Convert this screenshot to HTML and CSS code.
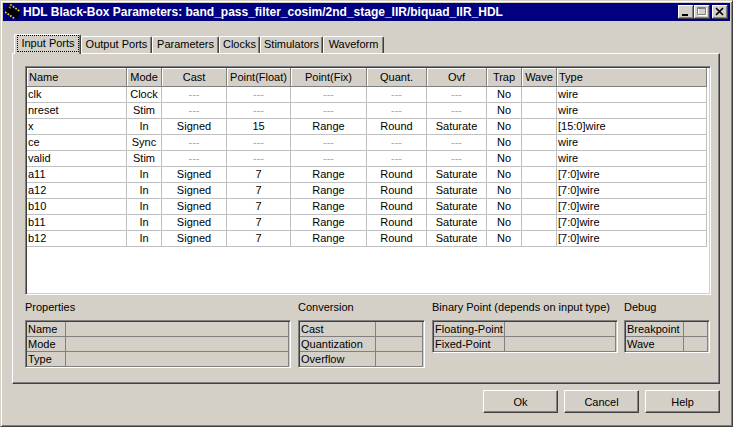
FILE: index.html
```html
<!DOCTYPE html>
<html>
<head>
<meta charset="utf-8">
<title>HDL Black-Box Parameters</title>
<link rel="stylesheet" href="styles.css">
</head>
<body>
<div class="window">
  <div class="titlebar">
    <svg class="appicon" width="16" height="16" viewBox="0 0 16 16">
      <g transform="rotate(35 8 8)">
        <rect x="1.5" y="2.6" width="1.7" height="2" fill="#f0d000"/>
        <rect x="4.6" y="2.6" width="1.7" height="2" fill="#f0d000"/>
        <rect x="7.7" y="2.6" width="1.7" height="2" fill="#f0d000"/>
        <rect x="10.8" y="2.6" width="1.7" height="2" fill="#f0d000"/>
        <rect x="1.5" y="11.4" width="1.7" height="2" fill="#f0d000"/>
        <rect x="4.6" y="11.4" width="1.7" height="2" fill="#f0d000"/>
        <rect x="7.7" y="11.4" width="1.7" height="2" fill="#f0d000"/>
        <rect x="10.8" y="11.4" width="1.7" height="2" fill="#f0d000"/>
        <rect x="0.5" y="4.5" width="14.5" height="7" fill="#000"/>
        <rect x="1.5" y="5.5" width="2.5" height="1.2" fill="#909090"/>
      </g>
    </svg>
    <span class="title">HDL Black-Box Parameters: band_pass_filter_cosim/2nd_stage_IIR/biquad_IIR_HDL</span>
    <div class="caption-btns">
      <span class="cbtn">
        <svg width="16" height="14" viewBox="0 0 16 14"><rect x="4" y="9" width="6" height="2" fill="#000"/></svg>
      </span>
      <span class="cbtn">
        <svg width="16" height="14" viewBox="0 0 16 14">
          <path d="M4.5 3.5h8v7h-8z" fill="none" stroke="#fff"/>
          <path d="M3.5 2.5h8v7h-8z M3 3.5h9" fill="none" stroke="#808080"/>
        </svg>
      </span>
      <span class="cbtn close">
        <svg width="16" height="14" viewBox="0 0 16 14"><path d="M4 3 L11 10 M11 3 L4 10" stroke="#000" stroke-width="1.7" fill="none"/></svg>
      </span>
    </div>
  </div>

  <div class="client">
    <div class="tabs">
      <div class="tab selected t-input"><span class="focus">Input Ports</span></div>
      <div class="tab t-output">Output Ports</div>
      <div class="tab t-params">Parameters</div>
      <div class="tab t-clocks">Clocks</div>
      <div class="tab t-stim">Stimulators</div>
      <div class="tab t-wave">Waveform</div>
    </div>

    <div class="panel">
      <div class="gridbox">
        <div class="grow ghead">
          <div class="hc left">Name</div>
          <div class="hc">Mode</div>
          <div class="hc">Cast</div>
          <div class="hc">Point(Float)</div>
          <div class="hc">Point(Fix)</div>
          <div class="hc">Quant.</div>
          <div class="hc">Ovf</div>
          <div class="hc">Trap</div>
          <div class="hc">Wave</div>
          <div class="hc left">Type</div>
        </div>

        <div class="grow">
          <div class="c left">clk</div><div class="c">Clock</div><div class="c dim">---</div><div class="c dim">---</div><div class="c dim">---</div><div class="c dim">---</div><div class="c dim">---</div><div class="c">No</div><div class="c"></div><div class="c left">wire</div>
        </div>
        <div class="grow">
          <div class="c left">nreset</div><div class="c">Stim</div><div class="c dim">---</div><div class="c dim">---</div><div class="c dim">---</div><div class="c dim">---</div><div class="c dim">---</div><div class="c">No</div><div class="c"></div><div class="c left">wire</div>
        </div>
        <div class="grow">
          <div class="c left">x</div><div class="c">In</div><div class="c">Signed</div><div class="c">15</div><div class="c">Range</div><div class="c">Round</div><div class="c">Saturate</div><div class="c">No</div><div class="c"></div><div class="c left">[15:0]wire</div>
        </div>
        <div class="grow">
          <div class="c left">ce</div><div class="c">Sync</div><div class="c dim">---</div><div class="c dim">---</div><div class="c dim">---</div><div class="c dim">---</div><div class="c dim">---</div><div class="c">No</div><div class="c"></div><div class="c left">wire</div>
        </div>
        <div class="grow">
          <div class="c left">valid</div><div class="c">Stim</div><div class="c dim">---</div><div class="c dim">---</div><div class="c dim">---</div><div class="c dim">---</div><div class="c dim">---</div><div class="c">No</div><div class="c"></div><div class="c left">wire</div>
        </div>
        <div class="grow">
          <div class="c left">a11</div><div class="c">In</div><div class="c">Signed</div><div class="c">7</div><div class="c">Range</div><div class="c">Round</div><div class="c">Saturate</div><div class="c">No</div><div class="c"></div><div class="c left">[7:0]wire</div>
        </div>
        <div class="grow">
          <div class="c left">a12</div><div class="c">In</div><div class="c">Signed</div><div class="c">7</div><div class="c">Range</div><div class="c">Round</div><div class="c">Saturate</div><div class="c">No</div><div class="c"></div><div class="c left">[7:0]wire</div>
        </div>
        <div class="grow">
          <div class="c left">b10</div><div class="c">In</div><div class="c">Signed</div><div class="c">7</div><div class="c">Range</div><div class="c">Round</div><div class="c">Saturate</div><div class="c">No</div><div class="c"></div><div class="c left">[7:0]wire</div>
        </div>
        <div class="grow">
          <div class="c left">b11</div><div class="c">In</div><div class="c">Signed</div><div class="c">7</div><div class="c">Range</div><div class="c">Round</div><div class="c">Saturate</div><div class="c">No</div><div class="c"></div><div class="c left">[7:0]wire</div>
        </div>
        <div class="grow">
          <div class="c left">b12</div><div class="c">In</div><div class="c">Signed</div><div class="c">7</div><div class="c">Range</div><div class="c">Round</div><div class="c">Saturate</div><div class="c">No</div><div class="c"></div><div class="c left">[7:0]wire</div>
        </div>
      </div>

      <div class="groups">
        <div class="group g-props">
          <div class="glabel">Properties</div>
          <div class="pbox">
            <div class="prow"><div class="pk">Name</div><div class="pv"></div></div>
            <div class="prow"><div class="pk">Mode</div><div class="pv"></div></div>
            <div class="prow"><div class="pk">Type</div><div class="pv"></div></div>
          </div>
        </div>
        <div class="group g-conv">
          <div class="glabel">Conversion</div>
          <div class="pbox">
            <div class="prow"><div class="pk">Cast</div><div class="pv"></div></div>
            <div class="prow"><div class="pk">Quantization</div><div class="pv"></div></div>
            <div class="prow"><div class="pk">Overflow</div><div class="pv"></div></div>
          </div>
        </div>
        <div class="group g-bin">
          <div class="glabel">Binary Point (depends on input type)</div>
          <div class="pbox">
            <div class="prow"><div class="pk">Floating-Point</div><div class="pv"></div></div>
            <div class="prow"><div class="pk">Fixed-Point</div><div class="pv"></div></div>
          </div>
        </div>
        <div class="group g-debug">
          <div class="glabel">Debug</div>
          <div class="pbox">
            <div class="prow"><div class="pk">Breakpoint</div><div class="pv"></div></div>
            <div class="prow"><div class="pk">Wave</div><div class="pv"></div></div>
          </div>
        </div>
      </div>
    </div>

    <div class="buttons">
      <div class="btn">Ok</div>
      <div class="btn">Cancel</div>
      <div class="btn">Help</div>
    </div>
  </div>
</div>
</body>
</html>
```

FILE: styles.css
```css
html, body {
  margin: 0;
  padding: 0;
  background: #d4d0c8;
}

.window {
  width: 733px;
  height: 427px;
  box-sizing: border-box;
  background: #d4d0c8;
  border: 1px solid;
  border-color: #d4d0c8 #404040 #404040 #d4d0c8;
  box-shadow: inset 1px 1px #ffffff, inset -1px -1px #808080;
  padding: 2px;
  font-family: "Liberation Sans", Arial, sans-serif;
  font-size: 11px;
  color: #000;
  overflow: hidden;
}

/* Title bar */
.titlebar {
  height: 18px;
  background: #000080;
  display: flex;
  align-items: center;
  color: #fff;
}

.appicon {
  margin-left: 2px;
  flex: none;
}

.title {
  margin-left: 2px;
  font-weight: bold;
  font-size: 12px;
  white-space: nowrap;
}

.caption-btns {
  margin-left: auto;
  margin-right: 2px;
  display: flex;
}

.cbtn {
  width: 16px;
  height: 14px;
  box-sizing: border-box;
  background: #d4d0c8;
  box-shadow: inset -1px -1px #404040, inset 1px 1px #ffffff, inset -2px -2px #808080;
  display: block;
}

.cbtn svg {
  display: block;
}

.cbtn.close {
  margin-left: 2px;
}

/* Client area */
.client {
  padding: 0 10px 0 9px;
}

.tabs {
  display: flex;
  align-items: flex-end;
  height: 19px;
  margin-top: 13px;
  margin-left: 2px;
}

.tab {
  height: 17px;
  box-sizing: border-box;
  border-top: 1px solid #ffffff;
  border-left: 1px solid #ffffff;
  border-right: 1px solid #404040;
  box-shadow: inset -1px 0 #808080;
  border-top-left-radius: 2px;
  border-top-right-radius: 2px;
  line-height: 15px;
  text-align: center;
  white-space: nowrap;
  background: #d4d0c8;
}

.tab.selected {
  height: 20px;
  margin-bottom: -1px;
  position: relative;
  z-index: 1;
  padding: 0 1px 2px 2px;
}

.focus {
  display: block;
  height: 17px;
  box-sizing: border-box;
  border: 1px dotted #000;
  line-height: 14px;
}

.t-input { width: 67px; }
.t-output { width: 71px; }
.t-params { width: 67px; }
.t-clocks { width: 41px; }
.t-stim { width: 63px; }
.t-wave { width: 61px; }

.panel {
  width: 708px;
  height: 331px;
  box-sizing: border-box;
  border: 1px solid;
  border-color: #ffffff #404040 #404040 #ffffff;
  box-shadow: inset -1px -1px #808080;
  padding: 12px 0 0 12px;
}

/* Ports grid */
.gridbox {
  width: 686px;
  height: 229px;
  box-sizing: border-box;
  border: 1px solid;
  border-color: #808080 #ffffff #ffffff #808080;
  box-shadow: inset 1px 1px #404040, inset -1px -1px #d4d0c8;
  padding: 1px;
  background: #ffffff;
}

.grow {
  display: grid;
  grid-template-columns: 100px 35px 65px 64px 76px 60px 60px 35px 35px 150px;
  height: 16px;
}

.grow.ghead {
  height: 19px;
}

.hc {
  background: #d4d0c8;
  box-sizing: border-box;
  border-right: 1px solid #808080;
  border-bottom: 1px solid #808080;
  box-shadow: inset 1px 1px #ffffff;
  line-height: 18px;
  text-align: center;
  white-space: nowrap;
  overflow: hidden;
}

.hc.left {
  text-align: left;
  padding-left: 2px;
}

.c {
  box-sizing: border-box;
  border-right: 1px solid #c0c0c0;
  border-bottom: 1px solid #c0c0c0;
  line-height: 15px;
  text-align: center;
  white-space: nowrap;
  overflow: hidden;
}

.c.left {
  text-align: left;
  padding-left: 1px;
}

.c.dim {
  color: #a8a8a8;
}

/* Property groups */
.groups {
  display: flex;
  margin-top: 5px;
}

.glabel {
  height: 14px;
  line-height: 14px;
  margin-bottom: 6px;
  white-space: nowrap;
}

.g-props { width: 266px; }
.g-conv { width: 127px; margin-left: 7px; }
.g-bin { width: 186px; margin-left: 7px; }
.g-debug { width: 86px; margin-left: 6px; }

.pbox {
  box-sizing: border-box;
  border: 1px solid;
  border-color: #808080 #ffffff #ffffff #808080;
  box-shadow: inset 1px 1px #404040;
  padding: 1px 1px 0 1px;
}

.prow {
  display: flex;
  height: 15px;
  box-sizing: border-box;
  border-bottom: 1px solid #808080;
}

.pk {
  box-sizing: border-box;
  border-right: 1px solid #808080;
  padding-left: 1px;
  line-height: 14px;
  white-space: nowrap;
  overflow: hidden;
  flex: none;
}

.pv {
  flex: 1;
  box-sizing: border-box;
  border-right: 1px solid #808080;
}

.g-props .pk { width: 39px; }
.g-conv .pk { width: 76px; }
.g-bin .pk { width: 71px; }
.g-debug .pk { width: 58px; }

/* Dialog buttons */
.buttons {
  display: flex;
  justify-content: flex-end;
  gap: 6px;
  margin-top: 6px;
}

.btn {
  width: 75px;
  height: 23px;
  box-sizing: border-box;
  background: #d4d0c8;
  border: 1px solid;
  border-color: #ffffff #404040 #404040 #ffffff;
  box-shadow: inset -1px -1px #808080;
  display: flex;
  align-items: center;
  justify-content: center;
}
```
